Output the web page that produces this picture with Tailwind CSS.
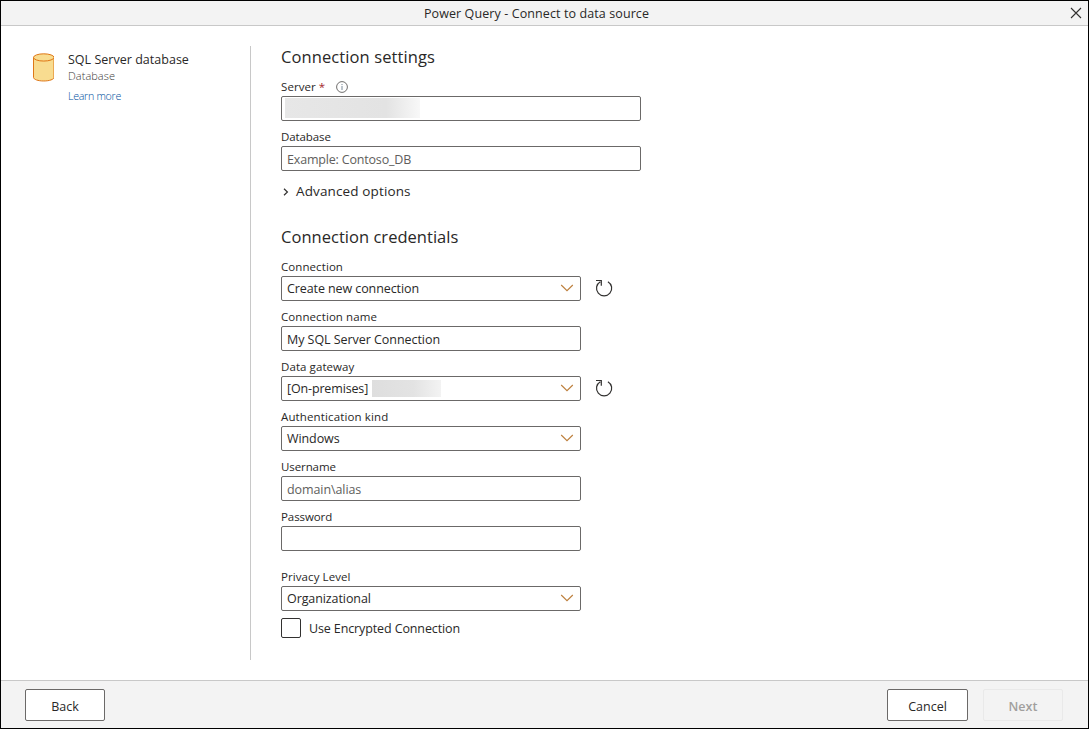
<!DOCTYPE html>
<html lang="en">
<head>
<meta charset="utf-8">
<title>Power Query - Connect to data source</title>
<script src="https://cdn.jsdelivr.net/npm/@tailwindcss/browser@4"></script>
</head>
<body class="h-[729px] w-[1089px] overflow-hidden bg-white font-['Open_Sans','Noto_Sans',sans-serif] text-[12.5px] tracking-[-0.09px] text-[#292827]">
<svg class="hidden">
  <symbol id="chevron" viewBox="0 0 14 8"><path d="M1.2 1 7 6.7 12.8 1" fill="none" stroke="#bd7f3c" stroke-width="1.1"/></symbol>
  <symbol id="refresh" viewBox="0 0 18 18"><path d="M5.3 2.7A7.6 7.6 0 1 0 12.9 2.7M1 1.5H6.3V6.8" fill="none" stroke="#323130" stroke-width="1.2"/></symbol>
</svg>
<div class="flex h-full flex-col border border-black">
  <header class="grid h-[25px] shrink-0 grid-cols-[1fr_auto_1fr] items-center border-b border-[#c8c8c8] bg-[#f3f3f3] pr-[6px]">
    <span></span>
    <h1 class="mr-[10px] pt-[2px] text-[12.5px] font-medium tracking-[0.1px] whitespace-nowrap">Power Query - Connect to data source</h1>
    <button class="justify-self-end" aria-label="Close"><svg class="size-3" viewBox="0 0 12 12"><path d="M1 1 11 11M11 1 1 11" stroke="#323130" stroke-width="1.1"/></svg></button>
  </header>
  <div class="flex min-h-0 flex-1 pt-5 pb-5">
    <aside class="flex w-[250px] shrink-0 gap-[14px] border-r border-[#c8c8c8] pt-[6px] pl-[31.5px]">
      <svg class="mt-px h-[29px] w-[21.5px] shrink-0" viewBox="0 0 22 29"><path d="M.5 4.2V24.6C.5 26.7 5.2 28.3 11 28.3S21.5 26.7 21.5 24.6V4.2" fill="#f8dc90" stroke="#dd7411"/><ellipse cx="11" cy="4.2" rx="10.5" ry="3.7" fill="#f8dc90" stroke="#dd7411"/></svg>
      <div class="whitespace-nowrap">
        <div class="h-4 text-[12.5px] leading-4 font-medium tracking-[0.02px]">SQL Server database</div>
        <div class="h-4 text-[11px] leading-4 font-light tracking-[0.04px] text-[#3b3a39]">Database</div>
        <a class="mt-1 block h-4 text-[10.7px] leading-4 font-light tracking-[-0.3px] text-[#0050a0]">Learn more</a>
      </div>
    </aside>
    <main class="w-[400px] pl-[30px] whitespace-nowrap">
      <h2 class="h-[30px] text-[16.5px] leading-[21px] font-medium tracking-[0.1px]">Connection settings</h2>
      <div class="flex h-5 items-center pt-[2px] text-[11.5px] font-medium tracking-[0.08px]">Server<span class="ml-[3px] font-normal text-[#a4262c]">*</span>
        <svg class="mb-px ml-[11px] size-[12px]" viewBox="0 0 12 12"><circle cx="6" cy="6" r="5.4" fill="none" stroke="#605e5c" stroke-width=".9"/><path d="M6 5V9M6 3V4.1" stroke="#7a8a98"/></svg></div>
      <div class="h-[25px] w-[360px] rounded-[2px] border border-[#6b6968] px-[3px] py-px"><div class="h-5 w-[135px] bg-linear-to-r from-[#e7e7e7] via-[#e3e3e3] via-75% to-[#f8f8f8]"></div></div>
      <div class="mt-[5px] flex h-5 items-center pt-[2px] text-[11.5px] font-medium">Database</div>
      <div class="flex h-[25px] w-[360px] items-center rounded-[2px] border border-[#6b6968] px-[5px] pt-[3px] tracking-[-0.18px] text-[#605e5c]">Example: Contoso_DB</div>
      <div class="mt-[10px] flex h-5 items-center text-[13.5px] font-medium tracking-[0.13px]"><svg class="mt-px mr-[7px] ml-[2px] h-2 w-[6px]" viewBox="0 0 6 8"><path d="M1 .8 4.4 4 1 7.2" fill="none" stroke="#323130" stroke-width="1.2"/></svg><span>Advanced options</span></div>
      <h2 class="mt-[25px] h-[30px] text-[16.5px] leading-[21px] font-medium tracking-[0.03px]">Connection credentials</h2>
      <div class="flex w-[360px] flex-col gap-[5px]">
        <div>
          <div class="flex h-5 items-center pt-[2px] text-[11.5px] font-medium tracking-[0.08px]">Connection</div>
          <div class="flex h-[25px] items-center"><div class="flex h-[25px] w-[300px] items-center justify-between rounded-[2px] border border-[#6b6968] px-[5px]"><span class="pt-px">Create new connection</span><svg class="mr-px mb-px h-2 w-[14px]"><use href="#chevron"/></svg></div><svg class="mb-[2px] ml-[14px] size-[18px]"><use href="#refresh"/></svg></div>
        </div>
        <div>
          <div class="flex h-5 items-center pt-[2px] text-[11.5px] font-medium tracking-[0.08px]">Connection name</div>
          <div class="flex h-[25px] w-[300px] items-center rounded-[2px] border border-[#6b6968] px-[5px] pt-[3px] tracking-[-0.05px]">My SQL Server Connection</div>
        </div>
        <div>
          <div class="flex h-5 items-center pt-[2px] text-[11.5px] font-medium tracking-[0.08px]">Data gateway</div>
          <div class="flex h-[25px] items-center"><div class="flex h-[25px] w-[300px] items-center rounded-[2px] border border-[#6b6968] px-[5px]"><span class="w-[85px] pt-px tracking-[-0.15px]">[On-premises]</span><div class="h-[17px] w-[69px] bg-linear-to-r from-[#dedede] via-[#e3e3e3] via-60% to-[#f3f3f3]"></div><svg class="mr-px mb-px ml-auto h-2 w-[14px]"><use href="#chevron"/></svg></div><svg class="mb-[2px] ml-[14px] size-[18px]"><use href="#refresh"/></svg></div>
        </div>
        <div>
          <div class="flex h-5 items-center pt-[2px] text-[11.5px] font-medium tracking-[0.13px]">Authentication kind</div>
          <div class="flex h-[25px] w-[300px] items-center justify-between rounded-[2px] border border-[#6b6968] px-[5px]"><span class="pt-px">Windows</span><svg class="mr-px mb-px h-2 w-[14px]"><use href="#chevron"/></svg></div>
        </div>
        <div>
          <div class="flex h-5 items-center pt-[2px] text-[11.5px] font-medium">Username</div>
          <div class="flex h-[25px] w-[300px] items-center rounded-[2px] border border-[#6b6968] px-[5px] pt-[3px] text-[#605e5c]">domain\alias</div>
        </div>
        <div>
          <div class="flex h-5 items-center pt-[2px] text-[11.5px] font-medium">Password</div>
          <div class="h-[25px] w-[300px] rounded-[2px] border border-[#6b6968]"></div>
        </div>
        <div class="mt-[10px]">
          <div class="flex h-5 items-center pt-[2px] text-[11.5px] font-medium tracking-[0.08px]">Privacy Level</div>
          <div class="flex h-[25px] w-[300px] items-center justify-between rounded-[2px] border border-[#6b6968] px-[5px]"><span class="pt-px">Organizational</span><svg class="mr-px mb-px h-2 w-[14px]"><use href="#chevron"/></svg></div>
        </div>
      </div>
      <div class="mt-[7px] flex h-5 items-center gap-2"><span class="size-5 rounded-[2px] border border-[#323130]"></span><span class="pt-[2px] tracking-[-0.12px]">Use Encrypted Connection</span></div>
    </main>
  </div>
  <footer class="flex h-[48px] shrink-0 items-center border-t border-[#c8c8c8] bg-[#f3f3f3] pr-[25px] pl-6 text-[12.5px] font-medium tracking-normal">
    <button class="h-8 w-20 rounded-[2px] border border-[#6b6968] bg-white pt-[5px]">Back</button>
    <button class="ml-auto h-8 w-[81px] rounded-[2px] border border-[#6b6968] bg-white pt-[5px]">Cancel</button>
    <button class="ml-[15px] h-8 w-20 rounded-[2px] border border-[#e9e9e9] pt-[5px] font-semibold text-[#a19f9d]" disabled>Next</button>
  </footer>
</div>
</body>
</html>
